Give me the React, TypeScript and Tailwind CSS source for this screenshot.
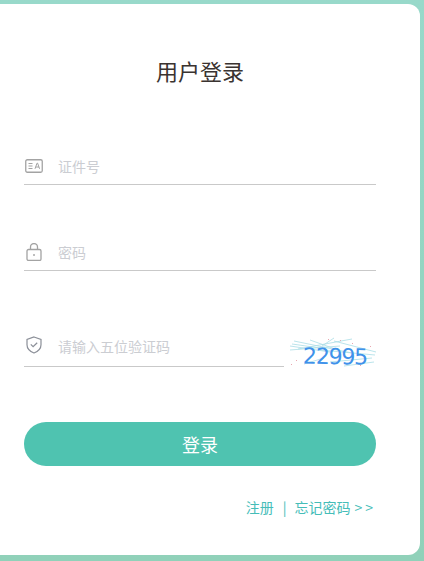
const FONT = "font-['Noto_Sans_CJK_SC','Noto_Sans',sans-serif]";

function IdIcon() {
  return (
    <svg width="18" height="14" viewBox="0 0 18 14" fill="none" stroke="#a3a3a3" className="block">
      <rect x="0.75" y="0.75" width="16.5" height="12.5" rx="1.5" strokeWidth="1.3" />
      <path d="M3.5 4.5h4M3.5 7h4M3.5 9.5h4" strokeWidth="1" />
      <path d="M10 9.8l2-5.6h.6l2 5.6M10.8 8h3.2" strokeWidth="1" />
    </svg>
  );
}

function LockIcon() {
  return (
    <svg width="16" height="18" viewBox="0 0 16 18" fill="none" stroke="#a3a3a3" className="block">
      <rect x="1" y="6.5" width="14" height="11" rx="1.5" strokeWidth="1.3" />
      <path d="M4.5 6.5V4a3.5 3.5 0 0 1 7 0v2.5" strokeWidth="1.3" />
      <path d="M8 11v2" strokeWidth="1.4" />
    </svg>
  );
}

function ShieldIcon() {
  return (
    <svg width="16" height="18" viewBox="0 0 16 18" fill="none" stroke="#8b8f98" className="block">
      <path d="M8 1l7 2.4v5.4c0 3.8-2.8 6.6-7 8.2-4.2-1.6-7-4.4-7-8.2V3.4L8 1z" strokeWidth="1.2" />
      <path d="M4.8 8.4l2.3 2.3 4.1-4" strokeWidth="1.2" />
    </svg>
  );
}

function Captcha() {
  return (
    <svg width="86" height="31" viewBox="0 0 86 31" className="block">
      <g stroke="#a9dde6" strokeWidth="0.8" fill="none">
        <path d="M0 10L40 16M4 5L62 17M8 13L62 3M20 4L48 14M30 14L85 19M44 5L86 16M0 14L50 10M14 28L34 22M40 26L82 22M54 30L84 26M32 10L44 2M2 8L30 12" />
      </g>
      <g fill="#e8a7b0">
        <rect x="6" y="24" width="1" height="1" />
        <rect x="1" y="28" width="1" height="1" />
        <rect x="50" y="4" width="1" height="1" />
        <rect x="70" y="29" width="1" height="1" />
        <rect x="80" y="10" width="1" height="1" />
        <rect x="62" y="7" width="1" height="1" />
        <rect x="38" y="3" width="1" height="1" />
      </g>
      <text x="13" y="28" fill="#3f92ea" fontSize="22" fontFamily="'DejaVu Sans',sans-serif" letterSpacing="-1.2" transform="rotate(1 44 20)">22995</text>
    </svg>
  );
}

function Field({ icon, placeholder, textOffset }: { icon: React.ReactNode; placeholder: string; textOffset: string }) {
  return (
    <div className="flex items-center h-[38px] border-b border-[#c9c9c9] w-[352px]">
      <span className={`flex justify-center w-5 ${textOffset}`}>{icon}</span>
      <span className="text-sm text-[#cbcdd2]">{placeholder}</span>
    </div>
  );
}

export default function App() {
  return (
    <div className={`w-[424px] h-[561px] overflow-hidden pt-1 bg-gradient-to-b from-[#98d9ca] to-[#90d1b9] ${FONT}`}>
      <div className="w-[420px] h-[551px] bg-white rounded-r-xl pl-6 pr-11">
        <h1 className="pt-[50px] text-center text-[22px] leading-[32px] text-[#3a3330]">用户登录</h1>
        <div className="mt-[61px]">
          <Field icon={<IdIcon />} placeholder="证件号" textOffset="mr-[14px]" />
        </div>
        <div className="mt-12">
          <Field icon={<LockIcon />} placeholder="密码" textOffset="mr-[14px]" />
        </div>
        <div className="mt-[58px] flex items-end gap-[6px]">
          <div className="flex items-start h-[38px] w-[260px] border-b border-[#c9c9c9] pt-[6px]">
            <span className="flex justify-center w-5 mr-[14px] pt-px"><ShieldIcon /></span>
            <span className="text-sm leading-[22px] text-[#cbcdd2]">请输入五位验证码</span>
          </div>
          <Captcha />
        </div>
        <button className="mt-[55px] w-[352px] h-11 rounded-[22px] bg-[#4fc3b0] text-white text-lg">登录</button>
        <div className="mt-[31px] flex justify-end items-center text-sm leading-5 text-[#45bdb8]">
          <span>注册</span>
          <span className="ml-[9px] mr-2">|</span>
          <span>忘记密码</span>
          <span className="ml-1 tracking-[3px]">&gt;&gt;</span>
        </div>
      </div>
    </div>
  );
}
